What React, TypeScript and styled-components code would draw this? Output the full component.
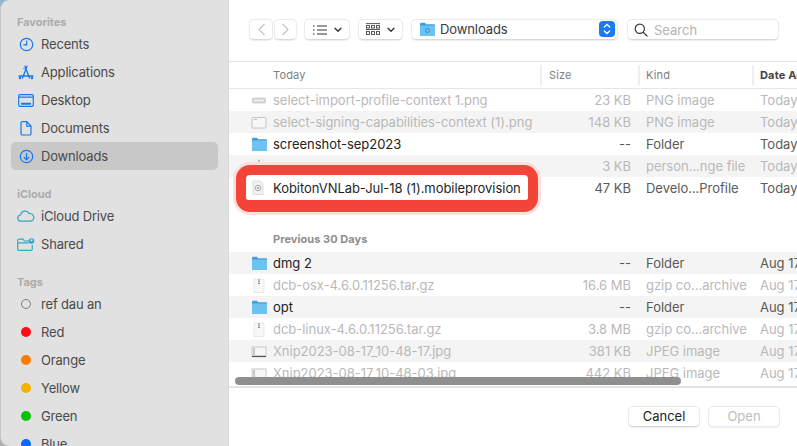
import React from "react";
import styled, { createGlobalStyle } from "styled-components";

const Global = createGlobalStyle`
  html, body { margin: 0; padding: 0; background: #fff; }
  body { width: 797px; height: 446px; overflow: hidden; font-family: Inter, "Liberation Sans", sans-serif; -webkit-font-smoothing: antialiased; }
  * { box-sizing: border-box; }
`;

const Frame = styled.div`
  position: relative; width: 797px; height: 446px; display: flex; overflow: hidden; background: #fff;
  font-size: 13px;
`;
const SideWrap = styled.div`
  width: 229px; height: 446px; flex: none; background: linear-gradient(#8db6d6 0, #9db6c8 30px, #b0b0b0 440px);
`;
const Sidebar = styled.aside`
  width: 229px; height: 446px; background: #e1e1e1; padding: 15px 10px 0;
  border-left: 1px solid #c6c6c6; border-right: 1px solid #dadada; border-radius: 9px 0 0 9px; overflow: hidden;
`;
const SectionLabel = styled.div<{ $gap?: number }>`
  height: 14px; line-height: 14px; font-size: 11px; font-weight: 700; color: #acacac; padding-left: 6px;
  margin-top: ${p => p.$gap ?? 0}px; margin-bottom: 1px; letter-spacing: -.05px;
`;
const SideItem = styled.div<{ $active?: boolean }>`
  height: 28px; display: flex; align-items: center; border-radius: 5px; color: #4a4a4a; white-space: nowrap; letter-spacing: -.17px;
  background: ${p => (p.$active ? "#c8c8c8" : "transparent")};
`;
const SideIcon = styled.span`
  width: 30px; flex: none; display: flex; justify-content: center;
`;
const Dot = styled.span<{ $c?: string }>`
  width: 10px; height: 10px; border-radius: 50%;
  background: ${p => p.$c ?? "transparent"};
  border: ${p => (p.$c ? "none" : "1.2px solid #7d7d7d")};
`;
const Main = styled.main`
  flex: 1; min-width: 0; display: flex; flex-direction: column; background: #fff;
`;
const Toolbar = styled.div`
  height: 62px; flex: none; display: flex; align-items: center; padding: 0 0 2px 20px; gap: 8px; border-bottom: 1px solid #e2e2e2;
`;
const Btn = styled.div<{ $w: number }>`
  width: ${p => p.$w}px; height: 21px; flex: none; display: flex; align-items: center; justify-content: center; gap: 7px;
  background: #fff; border-radius: 5px; border: 1px solid #ececec; border-bottom-color: #d8d8d8;
  box-shadow: 0 0.5px 1px rgba(0,0,0,.08);
`;
const NavPair = styled.div`
  display: flex; gap: 1px; width: 48px; margin-right: -1px;
`;
const PathPopup = styled(Btn)`
  justify-content: flex-start; padding: 0 2px 1px 8px; color: #3a3a3a; gap: 5px; letter-spacing: -.1px;
`;
const Stepper = styled.span`
  margin-left: auto; width: 16px; height: 16px; border-radius: 4px; background: #1b7bf2; display: flex; align-items: center; justify-content: center;
`;
const Search = styled(Btn)`
  justify-content: flex-start; padding-left: 6px; color: #b4b4b4; gap: 6px; margin-left: 1px; letter-spacing: 0;
`;
const Table = styled.div`
  flex: 1; min-height: 0; overflow: hidden; position: relative;
`;
const HeaderRow = styled.div`
  height: 27px; display: grid; grid-template-columns: 311px 98px 114px 60px; align-items: center; border-bottom: 1px solid #e6e6e6;
  font-size: 11px; color: #808080; letter-spacing: .15px;
`;
const HeaderCell = styled.div<{ $bold?: boolean; $divider?: boolean; $pad: number }>`
  height: 20px; line-height: 20px; padding-left: ${p => p.$pad}px; white-space: nowrap;
  font-weight: ${p => (p.$bold ? 700 : 400)}; color: ${p => (p.$bold ? "#444" : "#808080")};
  border-left: ${p => (p.$divider ? "2px solid #efefef" : "none")};
`;
const Row = styled.div<{ $stripe?: boolean; $dim?: boolean }>`
  height: 22px; display: grid; grid-template-columns: 311px 98px 114px 60px; align-items: center; white-space: nowrap; letter-spacing: -.02px;
  background: ${p => (p.$stripe ? "#f4f4f4" : "#fff")};
  color: ${p => (p.$dim ? "#b9b9b9" : "#5a5a5a")};
`;
const NameCell = styled.div<{ $dim?: boolean }>`
  display: flex; align-items: center; padding-left: 21px; gap: 5px; overflow: hidden;
  color: ${p => (p.$dim ? "#b9b9b9" : "#222")};
`;
const IconSlot = styled.span`
  width: 18px; flex: none; display: flex; justify-content: center;
`;
const SizeCell = styled.div`
  text-align: right; padding-right: 7px;
`;
const KindCell = styled.div`
  padding-left: 8px;
`;
const DateCell = styled.div`
  padding-left: 8px;
`;
const Group = styled.div`
  height: 31px; padding: 11px 0 0 44px; font-size: 11px; font-weight: 700; color: #8e8e8e; line-height: 14px; letter-spacing: .05px;
`;
const Spacer = styled.div<{ $h: number }>`
  height: ${p => p.$h}px;
`;
const ScrollBar = styled.div`
  position: absolute; left: 6px; width: 446px; top: 315px; height: 8px; border-radius: 4px; background: #8f8f8f;
`;
const Footer = styled.div`
  height: 60px; flex: none; border-top: 2px solid #e4e4e4; display: flex; justify-content: flex-end; align-items: flex-start; padding: 18px 17px 0 0; gap: 8px;
`;
const Action = styled.div<{ $off?: boolean }>`
  width: 72px; height: 21px; line-height: 19px; text-align: center; border-radius: 5px; background: #fff;
  border: 1px solid #ececec; border-bottom-color: ${p => (p.$off ? "#ececec" : "#d4d4d4")};
  color: ${p => (p.$off ? "#bdbdbd" : "#222")}; letter-spacing: 0;
  box-shadow: 0 0.5px 1px rgba(0,0,0,.07);
`;
const Callout = styled.div`
  position: absolute; left: 236px; top: 165px; width: 302px; height: 47px; border-radius: 14px; background: #fff;
  border: solid #f3443a; border-width: 10px 10px 12px; box-shadow: 0 0 0 3px #fde0dd;
  display: flex; align-items: center; padding-left: 6px; gap: 9px; color: #1f1f1f; white-space: nowrap; letter-spacing: -.05px;
  font-size: 13px;
`;

const blue = "#1478f0";
const teal = "#2fa9c8";

const Clock = () => (
  <svg width="15" height="15" viewBox="0 0 15 15" fill="none" stroke={blue} strokeWidth="1.2"><circle cx="7.5" cy="7.5" r="6.2" /><path d="M7.7 3.6v4.2H4.4" /></svg>
);
const Apps = () => (
  <svg width="16" height="15" viewBox="0 0 16 15" fill="none" stroke={blue} strokeWidth="1.3" strokeLinecap="round"><path d="M7 1.2 11.5 13M9 1.2 4.5 13M1 11h14M6 3.5h0" /><circle cx="2" cy="13" r=".6" /><circle cx="14" cy="13" r=".6" /></svg>
);
const Desk = () => (
  <svg width="16" height="13" viewBox="0 0 16 13" fill="none" stroke={blue} strokeWidth="1.2"><rect x=".7" y=".7" width="14.6" height="11.6" rx="1.4" /><path d="M1 3.2h14" /><path d="M3 9.8h10" strokeWidth="2" /></svg>
);
const Doc = () => (
  <svg width="12" height="15" viewBox="0 0 12 15" fill="none" stroke={blue} strokeWidth="1.2"><path d="M1 2a1.3 1.3 0 0 1 1.3-1.3h4.6L11 5v7.7A1.3 1.3 0 0 1 9.7 14H2.3A1.3 1.3 0 0 1 1 12.7z" /><path d="M6.8 1v4.2H11" /></svg>
);
const Down = () => (
  <svg width="15" height="15" viewBox="0 0 15 15" fill="none" stroke={blue} strokeWidth="1.2"><circle cx="7.5" cy="7.5" r="6.2" /><path d="M7.5 3.8v7M4.8 8.2l2.7 2.7 2.7-2.7" /></svg>
);
const Cloud = () => (
  <svg width="18" height="12" viewBox="0 0 18 12" fill="none" stroke={teal} strokeWidth="1.2"><path d="M4.2 11.2A3.1 3.1 0 0 1 3.6 5 4.6 4.6 0 0 1 12.2 3.6 3.8 3.8 0 0 1 13.6 11.2z" /></svg>
);
const Shared = () => (
  <svg width="18" height="13" viewBox="0 0 18 13" fill="none" stroke={teal} strokeWidth="1.2"><path d="M12 3H7.4L6 1.2H2A1.3 1.3 0 0 0 .7 2.5v8.6A1.3 1.3 0 0 0 2 12.4h12a1.3 1.3 0 0 0 1.3-1.3V7" /><path d="M.7 4.8h11" /><circle cx="14.5" cy="3" r="2.8" fill={teal} stroke="none" /><circle cx="14.5" cy="2.3" r="1" fill="#e1e1e1" stroke="none" /></svg>
);
const Chevron = ({ dir }: { dir: "l" | "r" }) => (
  <svg width="9" height="13" viewBox="0 0 9 13" fill="none" stroke="#c2c2c2" strokeWidth="1.1"><path d={dir === "l" ? "M7.5 1 2 6.5 7.5 12" : "M1.5 1 7 6.5 1.5 12"} /></svg>
);
const Caret = () => (
  <svg width="8" height="6" viewBox="0 0 8 6" fill="none" stroke="#333" strokeWidth="1.4" strokeLinecap="round"><path d="M1 1.3 4 4.3 7 1.3" /></svg>
);
const ListGlyph = () => (
  <svg width="14" height="10" viewBox="0 0 14 10" fill="none" stroke="#333" strokeWidth="1"><path d="M4 1h10M4 5h10M4 9h10M0 1h1.6M0 5h1.6M0 9h1.6" /></svg>
);
const GridGlyph = () => (
  <svg width="14" height="13" viewBox="0 0 14 13" fill="none" stroke="#444" strokeWidth=".9"><path d="M0 .6h14M0 6.5h14" /><rect x=".5" y="2.6" width="3" height="2.4" /><rect x="5.5" y="2.6" width="3" height="2.4" /><rect x="10.5" y="2.6" width="3" height="2.4" /><rect x=".5" y="8.6" width="3" height="2.8" /><rect x="5.5" y="8.6" width="3" height="2.8" /><rect x="10.5" y="8.6" width="3" height="2.8" /></svg>
);
const Folder = ({ small }: { small?: boolean }) => (
  <svg width="15" height="14" viewBox="0 0 15 14"><path d="M0 2a1.2 1.2 0 0 1 1.2-1.2h3.6L6.2 2.2h7.6A1.2 1.2 0 0 1 15 3.4V13a1 1 0 0 1-1 1H1a1 1 0 0 1-1-1z" fill="#3f9fd8" /><path d="M0 4.4a1 1 0 0 1 1-1h13a1 1 0 0 1 1 1V13a1 1 0 0 1-1 1H1a1 1 0 0 1-1-1z" fill="#6cc3f2" />{small && <circle cx="7.5" cy="8.6" r="2" fill="none" stroke="#3a8fc8" />}</svg>
);
const Updown = () => (
  <svg width="8" height="12" viewBox="0 0 8 12" fill="none" stroke="#fff" strokeWidth="1.3" strokeLinecap="round"><path d="M1.3 4 4 1.5 6.7 4M1.3 8 4 10.5 6.7 8" /></svg>
);
const Magnifier = () => (
  <svg width="14" height="14" viewBox="0 0 14 14" fill="none" stroke="#333" strokeWidth="1.2"><circle cx="5.8" cy="5.8" r="4.6" /><path d="M9.2 9.2 13 13" strokeLinecap="round" /></svg>
);
const Pic = ({ kind }: { kind: "pill" | "box" | "bar" }) => (
  <svg width="16" height="13" viewBox="0 0 16 13">
    {kind === "pill" && <><rect x="1" y="3.5" width="14" height="6" rx="1.5" fill="#d2d2d2" /><path d="M3 6.5h10" stroke="#f4f4f4" strokeWidth="1.5" /></>}
    {kind === "box" && <><rect x="1" y="1.5" width="14" height="10.5" rx="1" fill="#f7f7f7" stroke="#c4c4c4" /><path d="M3 3.5h3" stroke="#bbb" /></>}
    {kind === "bar" && <><rect x="1" y="2" width="14" height="9" fill="#f6f6f6" stroke="#c8c8c8" /><path d="M1 11.5h14" stroke="#555" strokeWidth="1.2" /><path d="M3 3v7" stroke="#999" /></>}
  </svg>
);
const Gz = () => (
  <svg width="12" height="15" viewBox="0 0 12 15"><path d="M1 1h10v13.5H1z" fill="#f8f8f8" stroke="#dcdcdc" strokeWidth=".6" /><path d="M6 1.5v5" stroke="#858585" strokeWidth="2" strokeDasharray="1 .7" /></svg>
);
const Prov = () => (
  <svg width="12" height="15" viewBox="0 0 12 15"><path d="M1 1h7l3 3v10.5H1z" fill="#f2f2f2" stroke="#d2d2d2" strokeWidth=".7" /><circle cx="6" cy="8" r="2.8" fill="none" stroke="#999" strokeWidth=".8" /><circle cx="6" cy="8" r="1" fill="#999" /></svg>
);

type RowData = { icon: React.ReactNode; name: string; size: string; kind: string; date: string; dim?: boolean; stripe?: boolean };

const today: RowData[] = [
  { icon: <Pic kind="pill" />, name: "select-import-profile-context 1.png", size: "23 KB", kind: "PNG image", date: "Today", dim: true },
  { icon: <Pic kind="box" />, name: "select-signing-capabilities-context (1).png", size: "148 KB", kind: "PNG image", date: "Today", dim: true, stripe: true },
  { icon: <Folder />, name: "screenshot-sep2023", size: "--", kind: "Folder", date: "Today" },
  { icon: <Gz />, name: "", size: "3 KB", kind: "person...nge file", date: "Today", dim: true, stripe: true },
  { icon: null, name: "", size: "47 KB", kind: "Develo...Profile", date: "Today" },
];
const previous: RowData[] = [
  { icon: <Folder />, name: "dmg 2", size: "--", kind: "Folder", date: "Aug 17", stripe: true },
  { icon: <Gz />, name: "dcb-osx-4.6.0.11256.tar.gz", size: "16.6 MB", kind: "gzip co...archive", date: "Aug 17", dim: true },
  { icon: <Folder />, name: "opt", size: "--", kind: "Folder", date: "Aug 17", stripe: true },
  { icon: <Gz />, name: "dcb-linux-4.6.0.11256.tar.gz", size: "3.8 MB", kind: "gzip co...archive", date: "Aug 17", dim: true },
  { icon: <Pic kind="bar" />, name: "Xnip2023-08-17_10-48-17.jpg", size: "381 KB", kind: "JPEG image", date: "Aug 17", dim: true, stripe: true },
  { icon: <Pic kind="bar" />, name: "Xnip2023-08-17_10-48-03.jpg", size: "442 KB", kind: "JPEG image", date: "Aug 17", dim: true },
];

const FileRow = ({ r }: { r: RowData }) => (
  <Row $stripe={r.stripe} $dim={r.dim}>
    <NameCell $dim={r.dim}><IconSlot>{r.icon}</IconSlot>{r.name}</NameCell>
    <SizeCell>{r.size}</SizeCell>
    <KindCell>{r.kind}</KindCell>
    <DateCell>{r.date}</DateCell>
  </Row>
);

export default function App() {
  return (
    <Frame>
      <Global />
      <SideWrap>
        <Sidebar>
          <SectionLabel>Favorites</SectionLabel>
          <SideItem><SideIcon><Clock /></SideIcon>Recents</SideItem>
          <SideItem><SideIcon><Apps /></SideIcon>Applications</SideItem>
          <SideItem><SideIcon><Desk /></SideIcon>Desktop</SideItem>
          <SideItem><SideIcon><Doc /></SideIcon>Documents</SideItem>
          <SideItem $active><SideIcon><Down /></SideIcon>Downloads</SideItem>
          <SectionLabel $gap={17}>iCloud</SectionLabel>
          <SideItem><SideIcon><Cloud /></SideIcon>iCloud Drive</SideItem>
          <SideItem><SideIcon><Shared /></SideIcon>Shared</SideItem>
          <SectionLabel $gap={17}>Tags</SectionLabel>
          <SideItem><SideIcon><Dot /></SideIcon>ref dau an</SideItem>
          <SideItem><SideIcon><Dot $c="#ff0d17" /></SideIcon>Red</SideItem>
          <SideItem><SideIcon><Dot $c="#fb7c00" /></SideIcon>Orange</SideItem>
          <SideItem><SideIcon><Dot $c="#f3b300" /></SideIcon>Yellow</SideItem>
          <SideItem><SideIcon><Dot $c="#00c400" /></SideIcon>Green</SideItem>
          <SideItem><SideIcon><Dot $c="#0a6cf5" /></SideIcon>Blue</SideItem>
        </Sidebar>
      </SideWrap>
      <Main>
        <Toolbar>
          <NavPair>
            <Btn $w={24}><Chevron dir="l" /></Btn>
            <Btn $w={23}><Chevron dir="r" /></Btn>
          </NavPair>
          <Btn $w={46}><ListGlyph /><Caret /></Btn>
          <Btn $w={45}><GridGlyph /><Caret /></Btn>
          <PathPopup $w={207}><Folder small />Downloads<Stepper><Updown /></Stepper></PathPopup>
          <Search $w={152}><Magnifier />Search</Search>
        </Toolbar>
        <Table>
          <HeaderRow>
            <HeaderCell $pad={44}>Today</HeaderCell>
            <HeaderCell $pad={7} $divider>Size</HeaderCell>
            <HeaderCell $pad={6} $divider>Kind</HeaderCell>
            <HeaderCell $pad={6} $divider $bold>Date Added</HeaderCell>
          </HeaderRow>
          {today.map(r => <FileRow key={r.size + r.kind} r={r} />)}
          <Spacer $h={22} />
          <Group>Previous 30 Days</Group>
          {previous.map(r => <FileRow key={r.name} r={r} />)}
          <ScrollBar />
        </Table>
        <Footer>
          <Action>Cancel</Action>
          <Action $off>Open</Action>
        </Footer>
      </Main>
      <Callout><Prov />KobitonVNLab-Jul-18 (1).mobileprovision</Callout>
    </Frame>
  );
}
